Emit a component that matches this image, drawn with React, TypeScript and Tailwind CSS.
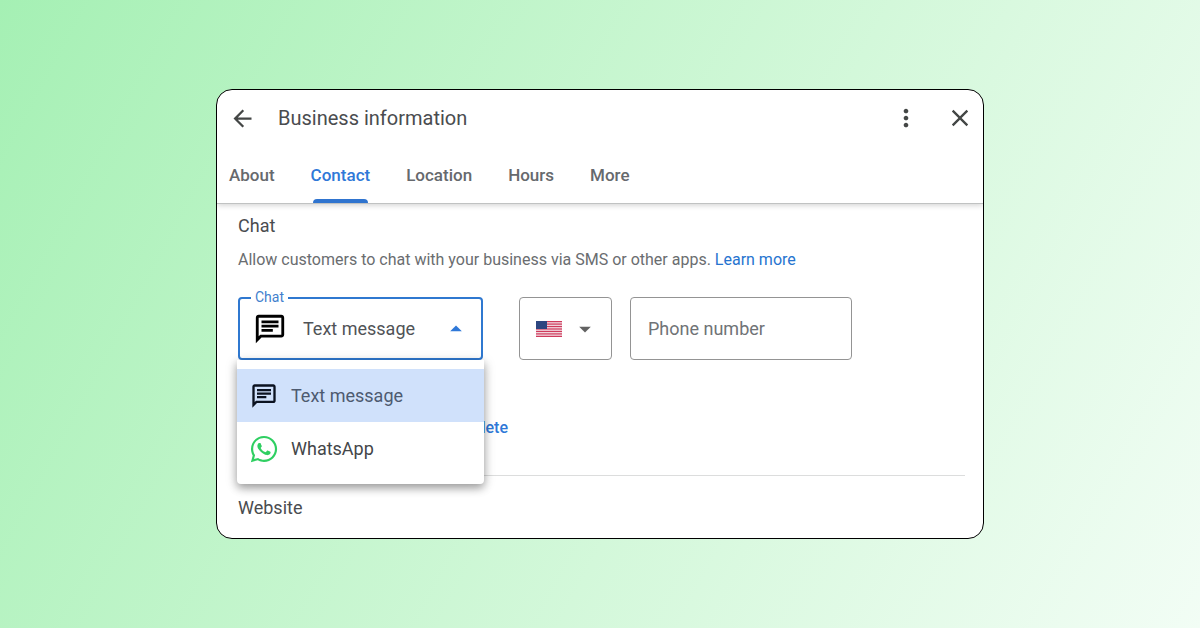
import React, { useState } from 'react';
import clsx from 'clsx';
import { FaWhatsapp } from 'react-icons/fa';
import { MdArrowBack, MdArrowDropDown, MdArrowDropUp, MdClose, MdMoreVert, MdOutlineChat } from 'react-icons/md';

const tabs = ['About', 'Contact', 'Location', 'Hours', 'More'];

const chatOptions = [
  { label: 'Text message', icon: <MdOutlineChat size={28} className="text-[#0b1220]" /> },
  { label: 'WhatsApp', icon: <FaWhatsapp size={30} className="text-[#2fcf62]" /> },
];

const UsFlag: React.FC = () => (
  <svg width="26" height="16" viewBox="0 0 26 16" aria-hidden="true">
    <rect width="26" height="16" fill="#f3dfe5" />
    {[0, 1, 2, 3, 4, 5, 6].map((i) => (
      <rect key={i} y={i * 2.46} width="26" height="1.23" fill="#cf3a5c" />
    ))}
    <rect width="11" height="8" fill="#2c4680" />
  </svg>
);

const Header: React.FC = () => (
  <header className="flex items-center pt-3 pr-[9px] pl-3">
    <button type="button" aria-label="Back" className="text-[#444746]">
      <MdArrowBack size={27} />
    </button>
    <h1 className="ml-[22px] flex-1 text-xl leading-8 text-[#4a4c4f]">Business information</h1>
    <button type="button" aria-label="More options" className="text-[#444746]">
      <MdMoreVert size={28} />
    </button>
    <button type="button" aria-label="Close" className="ml-[26px] text-[#444746]">
      <MdClose size={28} />
    </button>
  </header>
);

const Tabs: React.FC = () => {
  const [active, setActive] = useState('Contact');

  return (
    <nav className="mt-3.5 flex gap-9 px-3">
      {tabs.map((tab) => (
        <button
          key={tab}
          type="button"
          onClick={() => setActive(tab)}
          className={clsx(
            'relative h-[55px] text-[17px] font-medium',
            tab === active ? 'text-[#2f78d8]' : 'text-[#66696d]'
          )}
        >
          {tab}
          {tab === active && <span className="absolute inset-x-0.5 bottom-0 h-1 rounded-t bg-[#2f74cf]" />}
        </button>
      ))}
    </nav>
  );
};

const ChatSelect: React.FC = () => {
  const [open, setOpen] = useState(true);
  const [selected, setSelected] = useState('Text message');

  return (
    <div className="relative w-[245px]">
      <button
        type="button"
        aria-haspopup="listbox"
        aria-expanded={open}
        aria-labelledby="chat-label chat-value"
        onClick={() => setOpen(!open)}
        className="flex h-[63px] w-full items-center rounded border-2 border-[#2f78d0] pr-[11px] pl-[13px] text-left"
      >
        <MdOutlineChat size={34} className="text-black" />
        <span id="chat-value" className="ml-4 flex-1 text-lg text-[#505357]">{selected}</span>
        <MdArrowDropUp size={28} className="text-[#2f78d8]" />
      </button>
      <span id="chat-label" className="absolute -top-2 left-[13px] bg-white px-1 text-sm leading-4 text-[#4280cd]">
        Chat
      </span>
      {open && (
        <ul
          role="listbox"
          aria-labelledby="chat-label"
          className="absolute -inset-x-px top-full z-10 rounded-b bg-white py-[9px] shadow-[0_4px_8px_rgba(0,0,0,0.32),0_2px_14px_rgba(0,0,0,0.14)]"
        >
          {chatOptions.map(({ label, icon }) => (
            <li key={label} role="option" aria-selected={label === selected}>
              <button
                type="button"
                onClick={() => setSelected(label)}
                className={clsx(
                  'flex h-[53px] w-full items-center gap-3 px-3 text-left text-lg',
                  label === selected ? 'bg-[#d0e1fb] text-[#4d5a70]' : 'text-[#444649]'
                )}
              >
                <span className="flex w-[30px] justify-center">{icon}</span>
                {label}
              </button>
            </li>
          ))}
        </ul>
      )}
    </div>
  );
};

const App: React.FC = () => (
  <div className="flex min-h-screen items-center justify-center bg-linear-118 from-[#a5f0b4] to-[#f2fdf5] font-[Roboto,sans-serif]">
    <main className="w-full max-w-3xl overflow-hidden rounded-2xl border border-black bg-white">
      <div className="border-b border-[#c0c2c2] shadow-[0_1px_6px_rgba(0,0,0,0.2)]">
        <Header />
        <Tabs />
      </div>

      <section className="pt-2 pr-[18px] pl-[21px]">
        <h2 className="text-lg leading-7 text-[#4a4c4f]">Chat</h2>
        <p className="mt-2 text-base leading-6 text-[#6a6d70]">
          Allow customers to chat with your business via SMS or other apps.{' '}
          <a href="#learn-more" className="text-[#2674cf]">Learn more</a>
        </p>

        <div className="mt-[25px] flex">
          <ChatSelect />
          <div className="relative ml-9 flex h-[63px] w-[93px] items-center rounded border border-[#949494] pr-3 pl-4">
            <UsFlag />
            <MdArrowDropDown size={28} className="ml-auto text-[#626262]" />
            <select aria-label="Country code" className="absolute inset-0 w-full cursor-pointer opacity-0">
              <option>United States</option>
            </select>
          </div>
          <input
            type="tel"
            aria-label="Phone number"
            placeholder="Phone number"
            className="ml-[18px] h-[63px] w-[222px] rounded border border-[#949494] px-[17px] text-lg text-[#444649] placeholder:text-[#707376]"
          />
        </div>

        <div className="mt-14 flex w-[270px] justify-end">
          <a href="#delete" className="text-base leading-6 font-medium text-[#2f78d8]">Delete</a>
        </div>
        <hr className="mt-[35px] border-[#dcdddd]" />
      </section>

      <section className="px-[21px] pt-[18px] pb-4">
        <h2 className="text-lg leading-7 text-[#4a4c4f]">Website</h2>
      </section>
    </main>
  </div>
);

export default App;
